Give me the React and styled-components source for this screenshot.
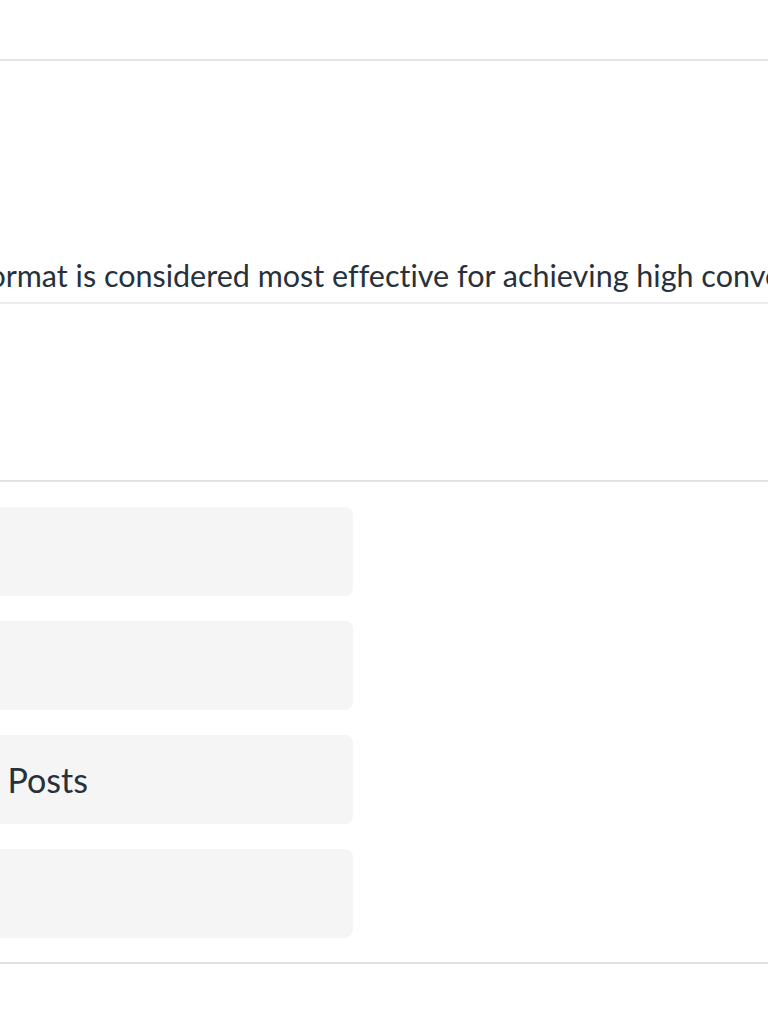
import React from 'react';
import styled, { createGlobalStyle } from 'styled-components';

const GlobalStyle = createGlobalStyle`
  html, body {
    margin: 0;
    padding: 0;
    background: #fff;
    overflow: hidden;
  }
  body {
    font-family: Lato, "Open Sans", sans-serif;
    color: #27313b;
    font-variant-ligatures: none;
  }
`;

// the screenshot is a zoomed crop, so the frame starts left of the viewport
const Frame = styled.div`
  width: 1400px;
  margin-left: -300px;
`;

const TopBar = styled.div`
  height: 59px;
  border-bottom: 2px solid #e4e4e4;
`;

const Question = styled.div`
  height: 243px;
  display: flex;
  align-items: flex-end;
  padding: 0 0 9px 143px;
  box-sizing: border-box;
  border-bottom: 2px solid #ececec;
  font-size: 30.5px;
  white-space: nowrap;
`;

const Blank = styled.div`
  height: 176px;
  border-bottom: 2px solid #e2e2e2;
`;

const OptionList = styled.div`
  display: flex;
  flex-direction: column;
  gap: 25px;
  padding: 25px 0 24px 86px;
  border-bottom: 2px solid #e2e2e2;
`;

const Option = styled.div`
  width: 567px;
  height: 89px;
  box-sizing: border-box;
  border-radius: 8px;
  background: #f5f5f5;
  display: flex;
  align-items: center;
  padding-left: 24px;
  font-size: 34px;
  white-space: nowrap;
`;

const options = ['Video Ads', 'Banners', 'Social Media Posts', 'Emails'];

export default function App() {
  return (
    <>
      <GlobalStyle />
      <Frame>
        <TopBar />
        <Question>
          Which ad format is considered most effective for achieving high conversion rates?
        </Question>
        <Blank />
        <OptionList>
          {options.map((o) => (
            <Option key={o}>{o}</Option>
          ))}
        </OptionList>
      </Frame>
    </>
  );
}
